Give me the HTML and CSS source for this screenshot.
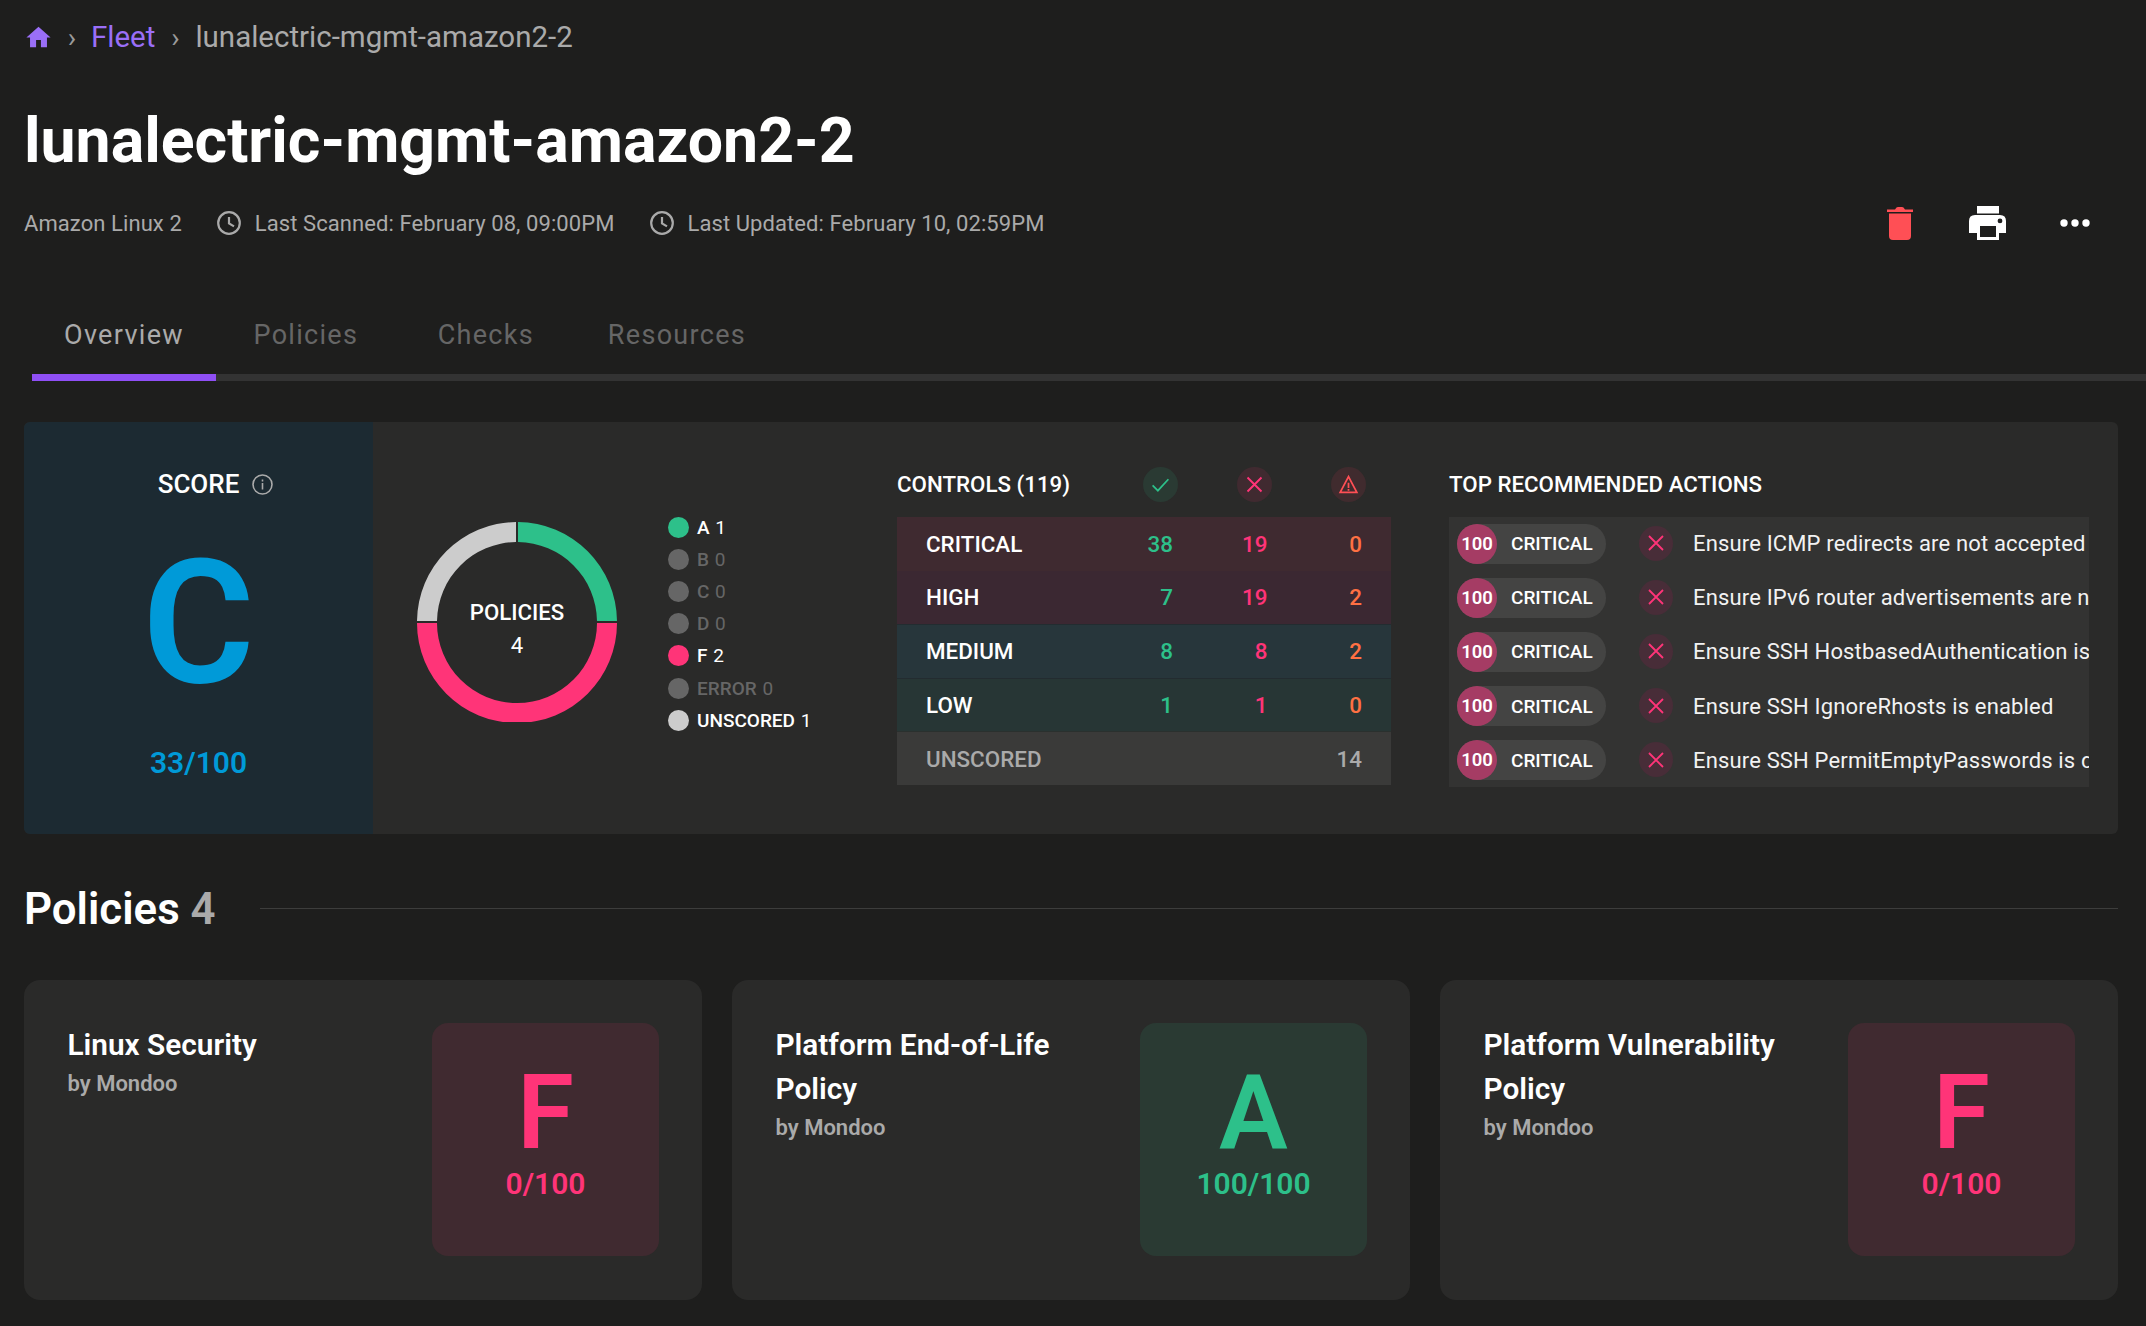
FILE: index.html
```html
<!DOCTYPE html>
<html lang="en">
<head>
<meta charset="utf-8">
<title>lunalectric-mgmt-amazon2-2</title>
<link rel="stylesheet" href="styles.css">
</head>
<body>
<svg class="defs" width="0" height="0" aria-hidden="true">
  <defs>
    <symbol id="x" viewBox="0 0 24 24"><path d="M5 5l14 14M19 5L5 19" fill="none" stroke="currentColor" stroke-width="1.800"/></symbol>
    <symbol id="clock" viewBox="0 0 24 24"><circle cx="12" cy="12" r="10.8" fill="none" stroke="currentColor" stroke-width="2.200"/><path d="M12 6v6.400l5 3" fill="none" stroke="currentColor" stroke-width="2.200"/></symbol>
  </defs>
</svg>
<main class="page">
  <nav class="crumbs">
    <svg class="home" viewBox="0 0 24 24"><path d="M10 20v-6h4v6h5v-8h3L12 3 2 12h3v8z" fill="currentColor"/></svg>
    <span class="sep">›</span>
    <a class="crumb-link">Fleet</a>
    <span class="sep">›</span>
    <span class="crumb-current">lunalectric-mgmt-amazon2-2</span>
  </nav>

  <h1 class="title">lunalectric-mgmt-amazon2-2</h1>

  <div class="meta">
    <span class="meta-os">Amazon Linux 2</span>
    <span class="meta-item"><svg class="clock"><use href="#clock"/></svg>Last Scanned: February 08, 09:00PM</span>
    <span class="meta-item"><svg class="clock"><use href="#clock"/></svg>Last Updated: February 10, 02:59PM</span>
    <span class="meta-actions">
      <svg class="act act-trash" viewBox="0 0 26 34"><path d="M0 3.500h8L9.500 1.500Q10 1 11 1h4q1 0 1.500.5L18 3.500h8V6H0zM2 7.500h22V30q0 4-4 4H6q-4 0-4-4z" fill="currentColor"/></svg>
      <svg class="act act-print" viewBox="0 0 37 34"><path d="M8 0h22v7.500H8zM6 9h25q6 0 6 6v12h-7v7H8v-7H0V15q0-6 6-6zm5 11v11h16V20zm20-7.500a2.400 2.400 0 100 4.800 2.400 2.400 0 000-4.800z" fill="currentColor" fill-rule="evenodd"/></svg>
      <svg class="act act-more" viewBox="0 0 30 8"><circle cx="4" cy="4" r="3.700" fill="currentColor"/><circle cx="15" cy="4" r="3.700" fill="currentColor"/><circle cx="26" cy="4" r="3.700" fill="currentColor"/></svg>
    </span>
  </div>

  <div class="tabs">
    <a class="tab tab-active">Overview</a>
    <a class="tab">Policies</a>
    <a class="tab">Checks</a>
    <a class="tab">Resources</a>
  </div>

  <section class="panel">
    <div class="score">
      <div class="score-label">SCORE
        <svg class="info" viewBox="0 0 21 21"><circle cx="10.500" cy="10.500" r="9.500" fill="none" stroke="currentColor" stroke-width="1.600"/><path d="M10.500 9v6.500M10.500 5.500v2" fill="none" stroke="currentColor" stroke-width="1.600"/></svg>
      </div>
      <div class="score-grade">C</div>
      <div class="score-value">33/100</div>
    </div>

    <div class="chart">
      <div class="donut">
        <svg class="donut-svg" viewBox="0 0 200 200">
          <path class="seg-a" d="M101 0A100 100 0 0 1 200 99H180A80 80 0 0 0 101 20z"/>
          <path class="seg-f" d="M200 101A100 100 0 0 1 0 101H20A80 80 0 0 0 180 101z"/>
          <path class="seg-u" d="M0 99A100 100 0 0 1 99 0V20A80 80 0 0 0 20 99z"/>
        </svg>
        <div class="donut-text"><strong>POLICIES</strong><span>4</span></div>
      </div>
      <ul class="legend">
        <li class="legend-item on"><i class="dot dot-a"></i><b>A</b> 1</li>
        <li class="legend-item"><i class="dot"></i><b>B</b> 0</li>
        <li class="legend-item"><i class="dot"></i><b>C</b> 0</li>
        <li class="legend-item"><i class="dot"></i><b>D</b> 0</li>
        <li class="legend-item on"><i class="dot dot-f"></i><b>F</b> 2</li>
        <li class="legend-item"><i class="dot"></i><b>ERROR</b> 0</li>
        <li class="legend-item on"><i class="dot dot-u"></i><b>UNSCORED</b> 1</li>
      </ul>
    </div>

    <div class="controls">
      <div class="controls-head">
        <h3 class="section-title">CONTROLS (119)</h3>
        <span class="badge badge-pass"><svg viewBox="0 0 24 24"><path d="M3 13l6 6L21 6" fill="none" stroke="currentColor" stroke-width="2"/></svg></span>
        <span class="badge badge-fail"><svg viewBox="0 0 24 24"><path d="M4 4l16 16M20 4L4 20" fill="none" stroke="currentColor" stroke-width="2.200"/></svg></span>
        <span class="badge badge-warn"><svg viewBox="0 0 24 24"><path d="M12 3L2.500 21h19z" fill="none" stroke="currentColor" stroke-width="2"/><path d="M12 10v6M12 17.200v1.800" fill="none" stroke="currentColor" stroke-width="2"/></svg></span>
      </div>
      <div class="row row-critical"><span class="row-name">CRITICAL</span><span class="pass">38</span><span class="fail">19</span><span class="warn">0</span></div>
      <div class="row row-high"><span class="row-name">HIGH</span><span class="pass">7</span><span class="fail">19</span><span class="warn">2</span></div>
      <div class="row row-medium"><span class="row-name">MEDIUM</span><span class="pass">8</span><span class="fail">8</span><span class="warn">2</span></div>
      <div class="row row-low"><span class="row-name">LOW</span><span class="pass">1</span><span class="fail">1</span><span class="warn">0</span></div>
      <div class="row row-unscored"><span class="row-name">UNSCORED</span><span class="total">14</span></div>
    </div>

    <div class="actions">
      <h3 class="section-title actions-title">TOP RECOMMENDED ACTIONS</h3>
      <ul class="action-list">
        <li class="action"><span class="pill"><b class="pill-num">100</b>CRITICAL</span><span class="x-badge"><svg><use href="#x"/></svg></span><span class="action-text">Ensure ICMP redirects are not accepted</span></li>
        <li class="action"><span class="pill"><b class="pill-num">100</b>CRITICAL</span><span class="x-badge"><svg><use href="#x"/></svg></span><span class="action-text">Ensure IPv6 router advertisements are not accepted</span></li>
        <li class="action"><span class="pill"><b class="pill-num">100</b>CRITICAL</span><span class="x-badge"><svg><use href="#x"/></svg></span><span class="action-text">Ensure SSH HostbasedAuthentication is disabled</span></li>
        <li class="action"><span class="pill"><b class="pill-num">100</b>CRITICAL</span><span class="x-badge"><svg><use href="#x"/></svg></span><span class="action-text">Ensure SSH IgnoreRhosts is enabled</span></li>
        <li class="action"><span class="pill"><b class="pill-num">100</b>CRITICAL</span><span class="x-badge"><svg><use href="#x"/></svg></span><span class="action-text">Ensure SSH PermitEmptyPasswords is disabled</span></li>
      </ul>
    </div>
  </section>

  <div class="policies-head">
    <h2 class="policies-title">Policies <span>4</span></h2>
    <div class="policies-rule"></div>
  </div>

  <section class="cards">
    <article class="card">
      <div class="card-text"><h4>Linux Security</h4><p>by Mondoo</p></div>
      <div class="grade grade-f"><div class="grade-letter">F</div><div class="grade-score">0/100</div></div>
    </article>
    <article class="card">
      <div class="card-text"><h4>Platform End-of-Life Policy</h4><p>by Mondoo</p></div>
      <div class="grade grade-a"><div class="grade-letter">A</div><div class="grade-score">100/100</div></div>
    </article>
    <article class="card">
      <div class="card-text"><h4>Platform Vulnerability Policy</h4><p>by Mondoo</p></div>
      <div class="grade grade-f"><div class="grade-letter">F</div><div class="grade-score">0/100</div></div>
    </article>
  </section>
</main>
</body>
</html>
```

FILE: styles.css
```css
* { box-sizing: border-box; }
html, body { margin: 0; padding: 0; }
body {
  background: #1e1e1d;
  color: #fff;
  font-family: Roboto, "Liberation Sans", sans-serif;
  overflow: hidden;
}
h1, h2, h3, h4, p, ul { margin: 0; padding: 0; }
ul { list-style: none; }
.defs { position: absolute; }
.page { padding: 0 28px 0 24px; height: 1326px; }

.crumbs { display: flex; align-items: center; height: 74px; font-size: 29.5px; color: #aaaaaa; }
.home { width: 29px; height: 29px; color: #9a6ff7; }
.sep { width: 40px; text-align: center; font-size: 28px; color: #9a9a9a; }
.sep:nth-of-type(1) { width: 38px; }
.crumb-link { color: #9a6ff7; }
.crumb-current { color: #aaaaaa; }

.title { font-size: 62.6px; font-weight: 700; line-height: 76px; margin-top: 29px; }

.meta { display: flex; align-items: center; height: 34px; margin-top: 27px; padding-right: 28px; font-size: 22px; color: #aaaaaa; letter-spacing: .08px; }
.meta-os { margin-right: 35px; }
.meta-item { display: flex; align-items: center; gap: 14px; margin-right: 35px; }
.clock { width: 24px; height: 24px; }
.meta-actions { margin-left: auto; display: flex; align-items: center; }
.act { display: block; }
.act-trash { width: 26px; height: 34px; color: #ff4f55; margin-right: 56px; }
.act-print { width: 37px; height: 34px; color: #fff; margin-right: 54px; }
.act-more { width: 30px; height: 8px; color: #fff; }

.tabs { display: flex; margin: 57px -28px 0 8px; height: 84px; border-bottom: 7px solid #333333; }
.tab { height: 84px; min-width: 180px; padding: 16px 32px 0; text-align: center; font-size: 27px; line-height: 44px; letter-spacing: 1.3px; color: #666666; }
.tab-active { color: #aaaaaa; border-bottom: 7px solid #8f4ff5; }

.panel { display: flex; height: 412px; margin-top: 41px; background: #2a2a29; border-radius: 6px; overflow: hidden; }
.score { flex: 0 0 349px; display: flex; flex-direction: column; align-items: center; background: #1c2a32; padding-top: 47px; }
.score-label { display: flex; align-items: center; gap: 13px; font-size: 26px; font-weight: 500; line-height: 30px; }
.info { width: 21px; height: 21px; margin-right: -34px; color: #aaaaaa; }
.score-grade { font-size: 172px; font-weight: 600; line-height: 180px; margin-top: 34px; color: #009ad8; }
.score-value { font-size: 30px; font-weight: 600; line-height: 36px; margin-top: 32px; color: #009ad8; }

.chart { flex: 0 0 524px; display: flex; align-items: flex-start; padding: 100px 0 0 44px; }
.donut { position: relative; width: 200px; height: 200px; flex: none; }
.donut-svg { display: block; width: 200px; height: 200px; }
.seg-a { fill: #2dc08a; }
.seg-f { fill: #ff3478; }
.seg-u { fill: #cccccc; }
.donut-text { position: absolute; inset: 0; display: flex; flex-direction: column; align-items: center; justify-content: center; padding-top: 14px; font-size: 22.2px; line-height: 33px; }
.donut-text strong { font-weight: 500; }
.legend { margin: -11px 0 0 51px; }
.legend-item { display: flex; align-items: center; height: 32.2px; font-size: 19px; color: #666666; white-space: pre; }
.legend-item b { font-weight: 500; margin-right: 1px; }
.legend-item.on { color: #ffffff; }
.dot { width: 21px; height: 21px; border-radius: 50%; background: #666666; margin-right: 8px; }
.dot-a { background: #2dc08a; }
.dot-f { background: #ff3478; }
.dot-u { background: #cccccc; }

.controls { flex: 0 0 494px; margin-right: 58px; padding-top: 45px; }
.section-title { font-size: 22.3px; font-weight: 500; line-height: 35px; }
.controls-head { display: grid; grid-template-columns: 1fr 94px 94px 94px; justify-items: end; height: 50px; padding-right: 25px; }
.controls-head .section-title { justify-self: start; }
.badge { display: flex; align-items: center; justify-content: center; width: 35px; height: 35px; border-radius: 50%; }
.badge svg { width: 21px; height: 21px; }
.badge-pass { background: #2a3a33; color: #2dc08a; }
.badge-fail { background: #402a30; color: #ff3478; }
.badge-warn { background: #402b2e; color: #ff4f55; }
.row { display: grid; grid-template-columns: 1fr 94.5px 94.5px 94.5px; align-items: center; height: 53.6px; padding: 0 29px; font-size: 22.4px; font-weight: 500; text-align: right; }
.row-name { text-align: left; }
.pass { color: #2dc08a; }
.fail { color: #ff3478; }
.warn { color: #ff7043; }
.row-critical { background: #3f2a30; }
.row-high { background: #3b2832; }
.row-medium { background: #27363b; border-top: 1px solid #232c30; }
.row-low { background: #273635; border-top: 1px solid #232c30; }
.row-unscored { background: #3a3a39; border-top: 1px solid #2a302e; color: #aaaaaa; }
.row-unscored .row-name { grid-column: 1 / 3; }
.total { grid-column: 4; }

.actions { flex: 0 0 640px; min-width: 0; padding-top: 45px; }
.actions-title { height: 50px; }
.action-list { height: 270px; background: #333332; padding-top: 6.5px; overflow: hidden; }
.action { display: flex; align-items: center; height: 54.2px; padding-bottom: 14px; white-space: nowrap; }
.pill { display: flex; align-items: center; width: 149px; height: 40px; margin-left: 8px; flex: none; background: #444443; border-radius: 20px; font-size: 19px; font-weight: 500; }
.pill-num { display: flex; align-items: center; justify-content: center; width: 40px; height: 40px; margin-right: 14px; border-radius: 50%; background: #a53c64; font-size: 18.5px; font-weight: 600; }
.x-badge { display: flex; align-items: center; justify-content: center; flex: none; width: 34px; height: 35px; margin: -1px 20px 0 33px; border-radius: 50%; background: #482d38; color: #ff3478; }
.x-badge svg { width: 24px; height: 24px; }
.action-text { font-size: 22px; letter-spacing: .16px; color: #f2f2f2; }

.policies-head { display: flex; align-items: center; height: 70px; margin-top: 39px; }
.policies-title { font-size: 43.8px; font-weight: 600; line-height: 70px; padding-top: 2px; white-space: pre; }
.policies-title span { color: #aaaaaa; }
.policies-rule { flex: 1; height: 1px; margin-left: 44px; background: #3d3d3c; }

.cards { display: grid; grid-template-columns: repeat(3, 1fr); gap: 30px; margin-top: 37px; }
.card { display: flex; justify-content: space-between; height: 320px; padding: 43px 43px 43px 43.5px; background: #2a2a29; border-radius: 16px; }
.card-text { flex: 1; min-width: 0; padding-right: 30px; }
.card-text h4 { font-size: 29.8px; font-weight: 600; line-height: 44px; }
.card-text p { font-size: 22px; font-weight: 600; line-height: 30px; margin-top: 2px; color: #aaaaaa; }
.grade { flex: none; width: 227px; height: 233px; border-radius: 16px; text-align: center; }
.grade-f { background: #402a30; color: #ff3478; }
.grade-a { background: #2a3a33; color: #2dc08a; }
.grade-letter { font-size: 103px; font-weight: 600; line-height: 112px; margin-top: 34px; }
.grade-score { font-size: 30px; font-weight: 600; line-height: 30px; }
```
